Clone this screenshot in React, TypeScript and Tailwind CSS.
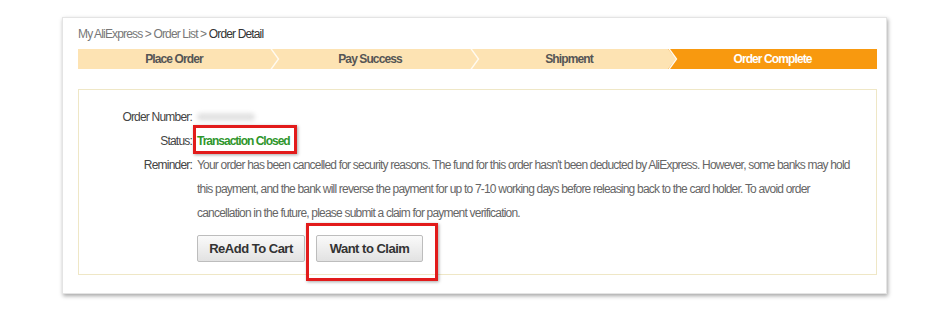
import React from "react";

const steps = [
  { name: "Place Order", w: "w-[192px]", done: false },
  { name: "Pay Success", w: "w-[200px]", done: false },
  { name: "Shipment", w: "w-[198px]", done: false },
  { name: "Order Complete", w: "flex-1", done: true },
];

function Chevron({ color }: { color: string }) {
  return (
    <svg className="absolute left-0 top-0 h-[20px] w-[10px]" viewBox="0 0 10 20">
      <polygon points="0,0 8,10 0,20" fill={color} />
      <polyline points="0.5,-1 8.5,10 0.5,21" fill="none" stroke="#fffaf0" strokeWidth="1.4" />
    </svg>
  );
}

function StepBar() {
  return (
    <div className="flex h-[20px] w-[799px]">
      {steps.map((s, i) => (
        <div
          key={s.name}
          className={`relative flex items-center justify-center ${s.w} ${
            s.done ? "bg-[#f8990f] text-white" : "bg-[#fde3b3] text-[#555]"
          } text-[12px] font-bold tracking-[-0.9px]`}
        >
          {i > 0 && <Chevron color="#fde3b3" />}
          {s.name}
        </div>
      ))}
    </div>
  );
}

export default function App() {
  return (
    <div
      className="w-[950px] h-[312px] bg-white pt-[17px] pl-[62px]"
      style={{ fontFamily: '"Liberation Sans", Arial, sans-serif' }}
    >
      <div className="w-[825px] h-[277px] bg-white border border-[#e4e4e4] shadow-[1px_2px_4px_rgba(0,0,0,0.35)] px-[15px] pt-[7px]">
        <div className="text-[12px] leading-[18px] tracking-[-0.85px] text-[#777]">
          My AliExpress &gt; Order List &gt; <span className="text-[#333]">Order Detail</span>
        </div>
        <div className="mt-[6px]">
          <StepBar />
        </div>

        <div className="mt-[20px] w-[799px] h-[186px] border border-[#efe7c6] pt-[15px]">
          <div className="grid grid-cols-[113px_1fr] gap-x-[5px] text-[12px] leading-[24px] tracking-[-0.8px]">
            <div className="text-right text-[#444]">Order Number:</div>
            <div className="flex items-center">
              <span className="h-[8px] w-[58px] rounded-full bg-[#e3e3e3] blur-[2px]" />
            </div>

            <div className="text-right text-[#444]">Status:</div>
            <div>
              <span className="relative font-bold tracking-[-1px] text-[#2f962c]">
                Transaction Closed
                <span className="absolute left-[-4px] right-[-7px] top-[-9px] bottom-[-6px] border-[3px] border-[#e21b1b] shadow-[1px_1px_3px_rgba(0,0,0,0.35)]" />
              </span>
            </div>

            <div className="text-right text-[#444]">Reminder:</div>
            <div className="whitespace-nowrap text-[#666]">
              Your order has been cancelled for security reasons. The fund for this order hasn't been deducted by AliExpress. However, some banks may hold
              <br />
              this payment, and the bank will reverse the payment for up to 7-10 working days before releasing back to the card holder. To avoid order
              <br />
              cancellation in the future, please submit a claim for payment verification.
            </div>

            <div />
            <div className="mt-[10px] flex gap-[11px]">
              <button className="h-[27px] w-[108px] rounded-[2px] border border-[#bdbdbd] bg-gradient-to-b from-[#fafafa] to-[#e2e2e2] text-[13px] font-bold tracking-[-0.5px] text-[#333]">
                ReAdd To Cart
              </button>
              <div className="relative">
                <button className="h-[27px] w-[107px] rounded-[2px] border border-[#bdbdbd] bg-gradient-to-b from-[#fafafa] to-[#e2e2e2] text-[13px] font-bold tracking-[-0.5px] text-[#333]">
                  Want to Claim
                </button>
                <span className="absolute left-[-10px] right-[-15px] top-[-12px] bottom-[-19px] border-[3px] border-[#e21b1b] shadow-[1px_1px_3px_rgba(0,0,0,0.35)]" />
              </div>
            </div>
          </div>
        </div>
      </div>
    </div>
  );
}
